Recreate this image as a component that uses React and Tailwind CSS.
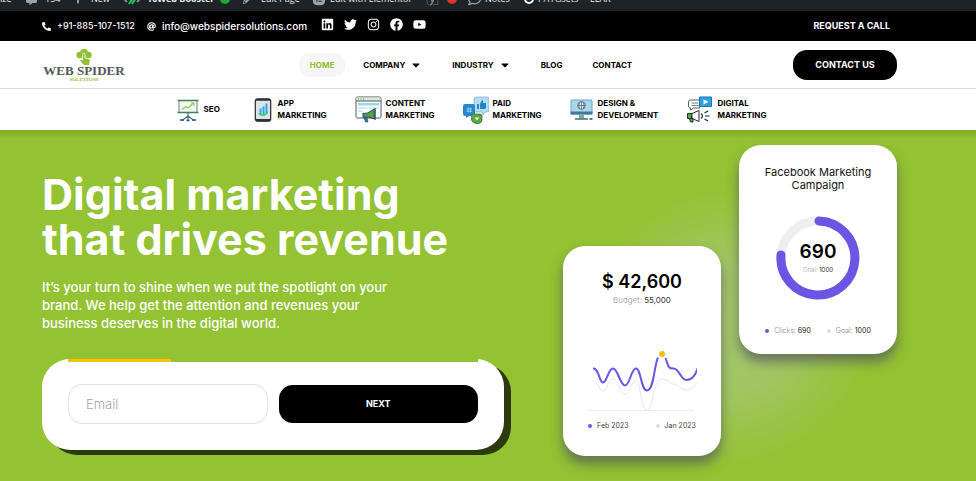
import { FaPhoneAlt, FaAt, FaLinkedin, FaTwitter, FaInstagram, FaFacebook, FaYoutube, FaCaretDown, FaPlus, FaPencilAlt, FaRegCommentDots, FaElementor, FaYoast, FaCommentAlt } from "react-icons/fa";

const SOCIALS = [
  { label: "LinkedIn", icon: FaLinkedin },
  { label: "Twitter", icon: FaTwitter },
  { label: "Instagram", icon: FaInstagram },
  { label: "Facebook", icon: FaFacebook },
  { label: "YouTube", icon: FaYoutube },
];

function SeoIcon() {
  return (
    <svg viewBox="0 0 22 24" className="w-6 h-6 shrink-0" fill="none">
      <path d="M11 15v4M11 18l-6 4.500M11 18l6 4.500M11 18v4" stroke="#3f6f96" strokeWidth="1.200" />
      <path d="M3 22h4M15 22h4M9.500 22.500h3" stroke="#24577f" strokeWidth="1.600" />
      <rect x="2" y="2.500" width="18" height="12" fill="#eef8ee" stroke="#51606a" strokeWidth=".8" />
      <path d="M.5 2.500h21M.5 14.500h21" stroke="#4a7a5c" strokeWidth="1.400" />
      <path d="m5 11.500 4-3 2 1.500 5.500-5" stroke="#8fc65c" strokeWidth="1.200" />
      <path d="M14 5h3v3" stroke="#8fc65c" />
    </svg>
  );
}

function AppIcon() {
  return (
    <svg viewBox="0 0 17 24" className="w-[22px] h-6 shrink-0">
      <rect x=".8" y=".8" width="15.400" height="22.400" rx="2.500" fill="#dfe3e8" stroke="#22262c" strokeWidth="1.200" />
      <path d="M1 2.800V2.500Q1 1 3 1h11q2 0 2 1.500v.3zM1 21v.5q0 1.700 2 1.700h11q2 0 2-1.700V21z" fill="#2c3037" />
      <path d="M5 10.500h2v6H5zM8 8.500h2v8H8zM11 5.500h2v10h-2z" fill="#2aa7e6" />
      <path d="M3 14c2 3 8 3 11-1-1 6-9 7-11 1z" fill="#37c98b" />
    </svg>
  );
}

function ContentIcon() {
  return (
    <svg viewBox="0 0 27 27" className="w-[27px] h-[27px] shrink-0">
      <rect x="1" y="1" width="25" height="21" rx="1.500" fill="#fff" stroke="#4b5862" />
      <path d="M1.500 1.500h24v3.500h-24z" fill="#dbe8d8" />
      <path d="M1 5h25" stroke="#4b5862" />
      <path d="M3 3h1M5.500 3h1M8 3h1" stroke="#5e9a3e" />
      <path d="M3 7h21v2.500H3zM3 11.500h9v1H3zM14 11.500h10v1H14zM3 14.500h5v1H3z" fill="#9fd3ee" />
      <path d="M8 17.500 12.500 17l7-4v10l-6-2-5 .5z" fill="#5b9f41" stroke="#234b5e" />
      <path d="m19 13 1.500-.5v11L19 23z" fill="#356f9c" stroke="#234b5e" strokeWidth=".6" />
      <path d="M9 21.500h3l1 4.500h-2.500z" fill="#356f9c" stroke="#234b5e" strokeWidth=".6" />
      <path d="M7.500 17.500h2v4h-2z" fill="#2f6f9e" />
    </svg>
  );
}

function PaidIcon() {
  return (
    <svg viewBox="0 0 26 28" className="w-[26px] h-7 shrink-0">
      <path d="M13 1h11q2 0 2 2v11q0 2-2 2h-2l-2 3-1-3h-6q-2 0-2-2V3q0-2 2-2z" fill="#b5dcf3" stroke="#6f9fbd" strokeWidth=".6" />
      <path d="M14 8h2v5h-2zM17 8l2-4q1.500 0 1 3h3v5l-1 1h-5z" fill="#2183c9" />
      <path d="M2 8h8q2 0 2 2v8q0 2-2 2H6l-3 2v-2H2q-2 0-2-2v-8q0-2 2-2z" fill="#2687cd" />
      <path d="M5 11.500v5M7.500 11.500v5M3.500 13h5.500M3.500 15.200h5.500" stroke="#a9d5f2" strokeWidth=".8" fill="none" />
      <path d="M10 18h7q2 0 2 2v4q0 3-4.500 4Q9 27 8.500 24v-4q0-2 1.500-2z" fill="#5aa443" stroke="#36733b" strokeWidth=".7" />
      <path d="m11.500 21.500 2.500 3 2.500-3z" fill="#e8f5e2" />
    </svg>
  );
}

function DesignIcon() {
  return (
    <svg viewBox="0 0 24 22" className="w-6 h-[22px] shrink-0" fill="none">
      <rect x="1" y="1" width="21" height="14" rx="1" fill="#a8d7ee" stroke="#6ba6c6" />
      <path d="M.5 12.500h22v3H.5z" fill="#41799f" />
      <circle cx="11.500" cy="6.500" r="3.800" fill="#e6f3fa" stroke="#3f5666" strokeWidth=".8" />
      <path d="M7.700 6.500h7.600M11.500 2.700v7.600M9.500 3.500q-1 3 0 6M13.500 3.500q1 3 0 6" stroke="#3f5666" strokeWidth=".7" />
      <path d="M9 15.500h5v4H9z" fill="#74b28a" />
      <path d="M5 20h13" stroke="#3d6d85" strokeWidth="1.500" />
      <path d="M19.500 19h3v2h-3z" fill="#4a7da0" />
    </svg>
  );
}

function DigitalIcon() {
  return (
    <svg viewBox="0 0 26 27" className="w-[27px] h-[27px] shrink-0" fill="none">
      <path d="M4 4h9v8H7l-3 2v-2q-2 0-2-2V6q0-2 2-2z" fill="#fff" stroke="#52606b" />
      <path d="M5 7h7M5 9.500h7" stroke="#52606b" strokeWidth=".8" />
      <path d="M13 1h12v9.500H13z" fill="#2f9de0" stroke="#1b76b4" />
      <path d="m17 3.200 5 2.600-5 2.600z" fill="#fff" />
      <path d="M1 17.500h4.500v5H1z" fill="#58a83f" stroke="#222c33" />
      <path d="m5.500 17.500 7-3v11l-7-3z" fill="#fff" stroke="#222c33" />
      <path d="M3 22.500h3.500V26H4z" fill="#58a83f" stroke="#222c33" />
      <path d="M14.500 17.500q3 2.500 0 5" stroke="#222c33" strokeWidth="1.200" />
      <path d="m18 17 3.500-2M18.500 20H23M18 23l3.500 2" stroke="#222c33" strokeWidth="1.200" />
    </svg>
  );
}

const SERVICES = [
  { lines: ["SEO"], icon: SeoIcon },
  { lines: ["APP", "MARKETING"], icon: AppIcon },
  { lines: ["CONTENT", "MARKETING"], icon: ContentIcon },
  { lines: ["PAID", "MARKETING"], icon: PaidIcon },
  { lines: ["DESIGN &", "DEVELOPMENT"], icon: DesignIcon },
  { lines: ["DIGITAL", "MARKETING"], icon: DigitalIcon },
];

function AdminBar() {
  return (
    <div className="h-[11px] overflow-hidden bg-[#1d2327] flex items-end font-['Open_Sans',sans-serif] text-[9px] text-[#f0f0f1]">
      <div className="h-6 flex items-center shrink-0 whitespace-nowrap">
        <span className="w-[26px]">ize</span>
        <span className="w-[47px] flex items-center gap-2"><FaCommentAlt size={11} color="#9ca2a7" />154</span>
        <span className="w-[50px] flex items-center gap-2"><FaPlus size={10} color="#9ca2a7" />New</span>
        <span className="w-[120px] flex items-center gap-1.5">
          <svg viewBox="0 0 18 12" className="w-[18px] h-3" fill="none">
            <path d="m4 3-3 3 3 3M14 3l3 3-3 3" stroke="#9ca2a7" strokeWidth="1.500" />
            <path d="m6 11 6-9M9 11l4-6" stroke="#22c65b" strokeWidth="2" />
          </svg>
          <b>10Web Booster</b>
          <span className="w-2.5 h-2.5 rounded-full bg-[#1fa83a]" />
        </span>
        <span className="w-[69px] flex items-center gap-2"><FaPencilAlt size={10} color="#9ca2a7" />Edit Page</span>
        <span className="w-[114px] flex items-center gap-1">
          <span className="w-3.5 h-3.5 rounded-full overflow-hidden"><FaElementor size={14} color="#9ca2a7" /></span>
          Edit with Elementor
        </span>
        <span className="w-[42px] flex items-center gap-2">
          <FaYoast size={13} color="#82878c" />
          <span className="w-2.5 h-2.5 rounded-full bg-[#dc3232]" />
        </span>
        <span className="w-14 flex items-center gap-1"><FaRegCommentDots size={13} color="#9ca2a7" />Notes</span>
        <span className="w-[66px] flex items-center gap-1">
          <span className="w-2.5 h-2.5 rounded-full border-2 border-white" />PA Assets
        </span>
        <span>LLAR</span>
      </div>
    </div>
  );
}

function TopBar() {
  return (
    <div className="h-[30px] bg-black text-white pl-[42px] pr-[86px] flex items-center justify-between text-[9px] font-medium">
      <div className="flex items-center">
        <a href="#phone" className="flex items-center gap-1.5"><FaPhoneAlt size={9} />+91-885-107-1512</a>
        <a href="#mail" className="flex items-center gap-1.5 ml-3 text-[10px]"><FaAt size={9} />info@webspidersolutions.com</a>
        <div className="flex items-center gap-2.5 ml-3.5 pb-1">
          {SOCIALS.map(({ label, icon: Icon }) => (
            <a key={label} href="#social" aria-label={label}><Icon size={13} /></a>
          ))}
        </div>
      </div>
      <a href="#call" className="font-bold">REQUEST A CALL</a>
    </div>
  );
}

function Logo() {
  return (
    <a href="#home" className="flex flex-col items-center w-[84px] pt-px">
      <svg viewBox="0 0 16 16" className="w-4 h-4">
        <circle cx="3.700" cy="6" r="3.200" fill="#8fc031" />
        <circle cx="8" cy="4" r="4" fill="#8fc031" />
        <circle cx="12.500" cy="6" r="3.200" fill="#8fc031" />
        <path d="M3.500 6h9v3.200h-9zM7 8l6 2q1 .4.800 1.500L13 16H8l-4-4.500 1-1 2 1z" fill="#8fc031" />
        <path d="M4 9.700h2.600V5.300q0-1.300 1.200-1.300T9 5.300V9l4.500 1" fill="none" stroke="#fff" strokeWidth=".8" />
      </svg>
      <span className="font-['Liberation_Serif',serif] font-bold text-[13px] leading-3 text-[#55565a] whitespace-nowrap">WEB SPIDER</span>
      <span className="font-['Liberation_Serif',serif] font-bold text-[5px] leading-[5px] text-[#8fc031]">SOLUTIONS</span>
    </a>
  );
}

function Header() {
  return (
    <header className="h-12 bg-white border-b border-[#dcdcdc] pl-[42px] pr-[79px] flex items-center justify-between">
      <Logo />
      <nav className="flex items-center ml-3 text-[8px] font-bold text-black">
        <a href="#home" className="h-6 px-[11px] rounded-[10px] bg-[#f6f6f9] text-[#8fc031] flex items-center">HOME</a>
        <a href="#company" className="flex items-center gap-[5px] ml-[18px]">COMPANY<FaCaretDown size={12} /></a>
        <a href="#industry" className="flex items-center gap-[5px] ml-[30px]">INDUSTRY<FaCaretDown size={12} /></a>
        <a href="#blog" className="ml-[30px]">BLOG</a>
        <a href="#contact" className="ml-[30px]">CONTACT</a>
      </nav>
      <button className="w-[104px] h-[30px] rounded-[14px] bg-black text-white text-[9px] font-bold">CONTACT US</button>
    </header>
  );
}

function Services() {
  return (
    <div className="h-[41px] bg-white flex items-center justify-center gap-7 pr-[34px]">
      {SERVICES.map(({ lines, icon: Icon }) => (
        <a key={lines.join(" ")} href="#service" className="flex items-center gap-1 text-[8px] leading-3 font-bold text-black">
          <Icon />
          <span className="min-w-5 pb-0.5">{lines.map((l) => <span key={l} className="block whitespace-nowrap">{l}</span>)}</span>
        </a>
      ))}
    </div>
  );
}

function LeadForm() {
  return (
    <form className="w-[462px] h-[91px] px-[26px] rounded-[28px] bg-white shadow-[7px_5px_0_#2c3a0f] flex flex-col">
      <div className="h-[3px] shrink-0 bg-[#93c232]">
        <div className="h-full w-1/4 bg-[#ffc107]" />
      </div>
      <div className="flex-1 grid grid-cols-2 items-center gap-[11px] pb-1">
        <input
          type="email"
          aria-label="Email"
          placeholder="Email"
          className="w-full h-10 px-[17px] rounded-[14px] border border-[#e2e2e2] text-[13px] font-light placeholder:text-[#a3a3a8] outline-none"
        />
        <button type="button" className="h-[38px] rounded-[14px] bg-black text-white text-[9px] font-bold">NEXT</button>
      </div>
    </form>
  );
}

function SpendCard() {
  return (
    <div className="w-[158px] h-[210px] mt-[101px] rounded-[22px] bg-white shadow-[0_8px_12px_rgba(80,85,90,0.7)] flex flex-col items-center">
      <div className="mt-6 text-[18px] leading-6 font-semibold text-black">$ 42,600</div>
      <div className="text-[8px] leading-3 text-[#333]"><span className="font-light text-[#999]">Budget:</span> 55,000</div>
      <svg viewBox="0 0 110 64" className="w-[110px] h-16 mt-[42px]" fill="none">
        <path d="M6 33c6 0 6 10 10 10s5-12 10-12 7 15 12 15 6-13 11-13 4 29 11 29 5-31 15-31c6 0 6 5 12 5 5 0 6 6 12 6 5 0 8-3 11-7" stroke="#e7e7ea" />
        <path d="M1 62.500h106" stroke="#ececee" />
        <path d="M6 20.500c6-1 6 14 10 14s5-14 10-14 7 17 12 17 6-17 11-17 5 22 11 22c7 0 7-25 11-33M78.500 10c3 8 2 10.500 8 10.500s7 11.500 13 11.500c5 0 9-5 11-11.500" stroke="#6a55e5" strokeWidth="2" />
        <circle cx="75" cy="6" r="3" fill="#fbbc0f" />
      </svg>
      <div className="flex items-center gap-[27px] mt-2 text-[7px] leading-3 text-[#444]">
        <span className="flex items-center gap-[5px]"><i className="w-1 h-1 rounded-full bg-[#6a55e5]" />Feb 2023</span>
        <span className="flex items-center gap-[5px]"><i className="w-1 h-1 rounded-full bg-[#dedede]" />Jan 2023</span>
      </div>
    </div>
  );
}

function CampaignCard() {
  return (
    <div className="w-[158px] h-[209px] rounded-[22px] bg-white shadow-[0_8px_12px_rgba(80,85,90,0.7)] flex flex-col items-center">
      <div className="mt-[21px] text-center text-[11px] leading-[13px] text-[#111]">Facebook Marketing<br />Campaign</div>
      <div className="relative w-[84px] h-[84px] mt-6 flex flex-col items-center justify-center">
        <svg viewBox="0 0 84 84" className="absolute inset-0" fill="none" strokeWidth="9">
          <circle cx="42" cy="42" r="37" stroke="#eee" />
          <path d="M43 5A37 37 0 1 1 5 39" stroke="#6a55e5" strokeLinecap="round" />
        </svg>
        <span className="relative text-[19px] leading-5 font-semibold text-black">690</span>
        <span className="relative mt-1 text-[6px] leading-2 text-[#222]"><span className="font-light text-[#999]">Goal:</span> 1000</span>
      </div>
      <div className="flex items-center gap-4 mt-[25px] text-[7px] leading-3 text-[#222]">
        <span className="flex items-center gap-[5px]"><i className="w-1 h-1 rounded-full bg-[#6a55e5]" /><span><span className="font-light text-[#888]">Clicks:</span> 690</span></span>
        <span className="flex items-center gap-[5px]"><i className="w-1 h-1 rounded-full bg-[#dedede]" /><span><span className="font-light text-[#888]">Goal:</span> 1000</span></span>
      </div>
    </div>
  );
}

function Hero() {
  return (
    <section className="min-h-[351px] bg-[#93c232] bg-[linear-gradient(to_bottom,rgba(60,80,10,0.22),transparent_9px)] pl-[42px] pr-[79px] flex justify-between">
      <div className="pt-[42px]">
        <h1 className="text-[43px] leading-[45px] font-bold text-white whitespace-nowrap">Digital marketing<br />that drives revenue</h1>
        <p className="mt-4 mb-[27px] text-[13px] leading-[18px] font-medium text-white whitespace-nowrap">
          It’s your turn to shine when we put the spotlight on your<br />
          brand. We help get the attention and revenues your<br />
          business deserves in the digital world.
        </p>
        <LeadForm />
      </div>
      <div className="pt-[15px] flex items-start gap-[18px] bg-[radial-gradient(circle_at_50%_56%,rgba(190,205,190,0.42)_0,rgba(190,205,190,0.36)_60px,rgba(190,205,190,0.16)_105px,transparent_142px)]">
        <SpendCard />
        <CampaignCard />
      </div>
    </section>
  );
}

export default function App() {
  return (
    <div className="min-h-screen bg-[#93c232] font-['Inter',sans-serif]">
      <AdminBar />
      <TopBar />
      <Header />
      <Services />
      <Hero />
    </div>
  );
}
